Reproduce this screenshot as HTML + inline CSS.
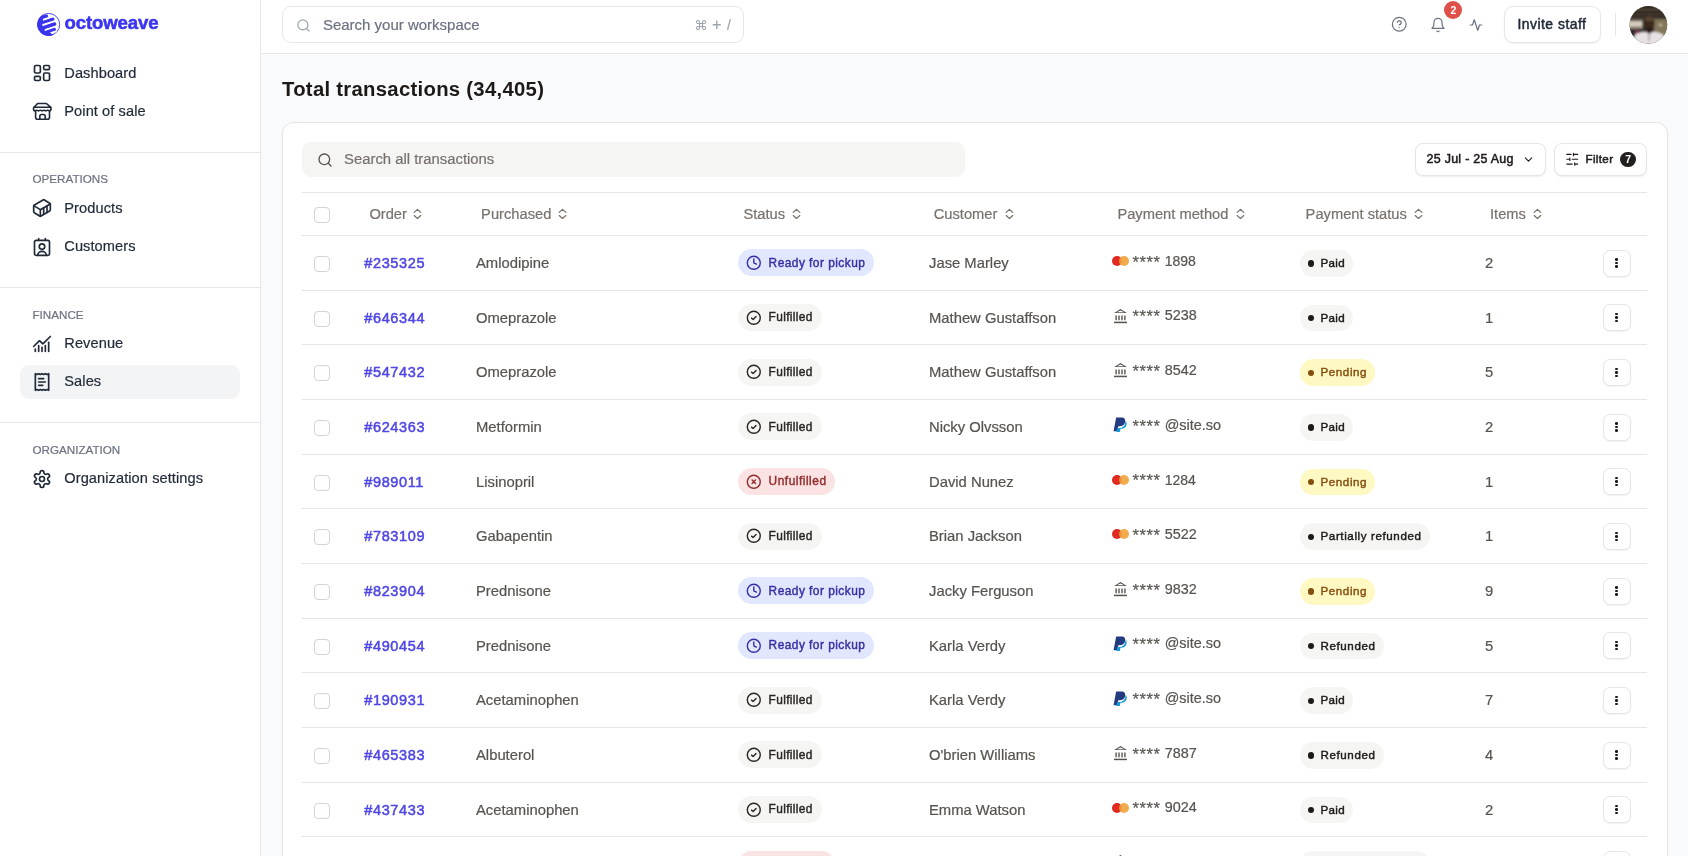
<!DOCTYPE html>
<html><head><meta charset="utf-8"><title>Transactions</title><style>
*{margin:0;padding:0;box-sizing:border-box}
html,body{width:1688px;height:856px;overflow:hidden;background:#f9fafb;font-family:"Liberation Sans",sans-serif;position:relative}
body{will-change:transform}
.t{position:absolute;white-space:nowrap}
.r{-webkit-text-stroke:0.2px currentColor}
.i{position:absolute;overflow:visible}
.sidebar{position:absolute;left:0;top:0;width:261px;height:856px;background:#fff;border-right:1px solid #e5e7eb}
.hr{position:absolute;left:0;width:260px;height:1px;background:#e5e7eb}
.active{position:absolute;background:#f3f4f6;border-radius:9px}
.header{position:absolute;left:261px;top:0;width:1427px;height:53.5px;background:#fff;border-bottom:1px solid #e5e7eb}
.box{position:absolute}
.btn{position:absolute;background:#fff;border:1px solid #e7e5e4;box-shadow:0 1px 1.5px rgba(0,0,0,.07)}
.badge2{position:absolute;left:1444.4px;top:1.2px;width:18px;height:18px;border-radius:50%;background:#e0504a;color:#fff;font-size:10.5px;font-weight:700;line-height:18px;text-align:center;font-family:"Liberation Sans",sans-serif}
.avatar{position:absolute;left:1630px;top:6px;width:37.5px;height:37.5px;border-radius:50%;overflow:hidden;
 background:radial-gradient(ellipse 7px 9px at 50% 42%,#3a2418 0,#3a2418 95%,transparent 100%),
 radial-gradient(ellipse 16px 10px at 50% 100%,#e8e2da 0,#e8e2da 90%,transparent 100%),
 linear-gradient(180deg,#2a2620 0,#5a4a38 40%,#3c3228 70%,#2a241e 100%)}
.card{position:absolute;left:282px;top:122px;width:1385.5px;height:800px;background:#fff;border:1px solid #e7e5e4;border-radius:12px;box-shadow:0 1px 3px rgba(0,0,0,.035)}
.tl{position:absolute;left:302px;width:1344.6px;height:1px;background:#e7e5e4}
.cb{position:absolute;left:314px;width:16px;height:16px;border:1px solid #d6d3d1;border-radius:4px;background:#fff}
.pill{position:absolute;height:27px;border-radius:14px}
.dot{position:absolute;width:6.2px;height:6.2px;border-radius:50%}
.mc{position:absolute;left:1112.3px;width:16.5px;height:10px}
.mc i{position:absolute;top:0;width:10px;height:10px;border-radius:50%}
.act{position:absolute;left:1603px;width:28px;height:27px;border:1px solid #e7e5e4;border-radius:7px;background:#fff;box-shadow:0 1px 1.5px rgba(0,0,0,.06)}
.act i{position:absolute;left:11.1px;width:2.5px;height:2.5px;border-radius:50%;background:#1c1917}
.act i:nth-child(1){top:7.6px}.act i:nth-child(2){top:11.1px}.act i:nth-child(3){top:14.6px}
.cnt{position:absolute;left:1620.3px;top:151.6px;width:15.5px;height:15.5px;border-radius:50%;background:#231f1e;color:#fff;font-size:10.5px;font-weight:700;line-height:15.5px;text-align:center}
</style></head>
<body>
<div class="sidebar"></div>
<svg class="i" style="left:36px;top:12px" width="26" height="26" viewBox="0 0 26 26"><defs><clipPath id="lc"><circle cx="12.7" cy="12.45" r="11.4"/></clipPath></defs><circle cx="12.7" cy="12.45" r="11.0" fill="none" stroke="#3b35f0" stroke-width="0.9"/><g clip-path="url(#lc)" fill="#3b35f0" stroke="#3b35f0" stroke-linecap="round" stroke-width="3.7"><path d="M-1 -1 H7.3 V10 H6.7 V15 H9.1 V21 H15.2 V27 H-1 Z" stroke="none"/><path d="M-5 9.3 L10.3 4.3"/><path d="M-5 14.6 L16.6 7.4"/><path d="M-5 19.9 L18.5 12.1"/><path d="M-5 25.2 L18.1 17.5"/><path d="M-5 30.5 L15.6 23.7"/></g><g stroke="#fff" stroke-width="1.45" stroke-linecap="round" fill="none"><path d="M7.6 7.5 L12 6"/><path d="M7.0 12.8 L18 9.2"/><path d="M9.3 18.0 L19.5 14.6"/><path d="M15.4 20.8 L20 19.3"/></g></svg>
<div class="t" style="left:64.60px;top:14.06px;font-size:18.6px;line-height:18.6px;color:#3b35f0;font-weight:700;letter-spacing:-0.15px;-webkit-text-stroke:0.55px #3b35f0">octoweave</div>
<svg class="i" style="left:32.20px;top:63.00px;" width="20" height="20" viewBox="0 0 24 24" fill="none" stroke="#1f2937" stroke-width="2" stroke-linecap="round" stroke-linejoin="round"><rect x="3" y="3" width="7" height="9" rx="1.5"/><rect x="14" y="3" width="7" height="5" rx="1.5"/><rect x="14" y="12" width="7" height="9" rx="1.5"/><rect x="3" y="16" width="7" height="5" rx="1.5"/></svg>
<div class="t r" style="left:64.30px;top:65.64px;font-size:14.6px;line-height:14.6px;color:#1f2937;font-weight:400;letter-spacing:0.08px;">Dashboard</div>
<svg class="i" style="left:30px;top:98px" width="25" height="26" viewBox="0 0 25 26" fill="none" stroke="#1f2937" stroke-width="1.6" stroke-linecap="round" stroke-linejoin="round"><path d="M7.6 5.5 H16.4 L20.6 9.2 H4.1 Z"/><path d="M4.1 9.2 Q3.5 9.5 3.5 10.5 V11.4 Q3.6 12.9 5 12.9 Q6.8 11.7 8.6 12.9 Q10.4 11.7 12.2 12.9 Q14 11.7 15.8 12.9 Q17.6 11.7 19.5 12.9 Q20.9 12.9 21 11.4 V10.5 Q21 9.5 20.6 9.2"/><path d="M5.6 13.2 V19.3 Q5.6 21.3 7.6 21.3 H17.5 Q19.5 21.3 19.5 19.3 V13.2"/><path d="M9.8 21.3 V18.3 Q9.8 16.5 11.6 16.5 H13.4 Q15.2 16.5 15.2 18.3 V21.3"/></svg>
<div class="t r" style="left:64.30px;top:103.74px;font-size:14.6px;line-height:14.6px;color:#1f2937;font-weight:400;letter-spacing:0.08px;">Point of sale</div>
<div class="hr" style="top:152px"></div>
<div class="t r" style="left:32.50px;top:173.44px;font-size:11.65px;line-height:11.65px;color:#6b7280;font-weight:400;letter-spacing:0px;">OPERATIONS</div>
<svg class="i" style="left:32.30px;top:198.30px;" width="20" height="20" viewBox="0 0 24 24" fill="none" stroke="#1f2937" stroke-width="2" stroke-linecap="round" stroke-linejoin="round"><path d="M22 7.7c0-.6-.4-1.2-.8-1.5l-6.3-3.9a1.72 1.72 0 0 0-1.7 0l-10.3 6c-.5.2-.9.8-.9 1.4v6.6c0 .5.4 1.2.8 1.5l6.3 3.9a1.72 1.72 0 0 0 1.7 0l10.3-6c.5-.3.9-1 .9-1.5Z"/><path d="M10 21.9V14L2.1 9.1"/><path d="m10 14 11.9-6.9"/><path d="M14 19.8v-8.1"/><path d="M18 17.5V9.4"/></svg>
<div class="t r" style="left:64.30px;top:200.64px;font-size:14.6px;line-height:14.6px;color:#1f2937;font-weight:400;letter-spacing:0.08px;">Products</div>
<svg class="i" style="left:32.20px;top:236.50px;" width="20" height="20" viewBox="0 0 24 24" fill="none" stroke="#1f2937" stroke-width="2" stroke-linecap="round" stroke-linejoin="round"><path d="M16 2v2"/><path d="M6.8 22 a5.2 4.8 0 0 1 10.4 0"/><path d="M8 2v2"/><circle cx="12" cy="11.5" r="3.3"/><rect x="3" y="4" width="18" height="18" rx="2"/></svg>
<div class="t r" style="left:64.30px;top:239.24px;font-size:14.6px;line-height:14.6px;color:#1f2937;font-weight:400;letter-spacing:0.08px;">Customers</div>
<div class="hr" style="top:287px"></div>
<div class="t r" style="left:32.50px;top:309.14px;font-size:11.65px;line-height:11.65px;color:#6b7280;font-weight:400;letter-spacing:0px;">FINANCE</div>
<svg class="i" style="left:32.10px;top:333.60px;" width="20" height="20" viewBox="0 0 24 24" fill="none" stroke="#1f2937" stroke-width="2" stroke-linecap="round" stroke-linejoin="round"><path d="M12 16v5"/><path d="M16 14v7"/><path d="M20 10v11"/><path d="m22 3-8.646 8.646a.5.5 0 0 1-.708 0L9.354 8.354a.5.5 0 0 0-.707 0L2 15"/><path d="M4 18v3"/><path d="M8 14v7"/></svg>
<div class="t r" style="left:64.30px;top:335.94px;font-size:14.6px;line-height:14.6px;color:#1f2937;font-weight:400;letter-spacing:0.08px;">Revenue</div>
<div class="active" style="left:20px;top:365px;width:220px;height:34px"></div>
<svg class="i" style="left:32.10px;top:371.60px;" width="20" height="20" viewBox="0 0 24 24" fill="none" stroke="#1f2937" stroke-width="2" stroke-linecap="round" stroke-linejoin="round"><path d="M4 2v20l2-1 2 1 2-1 2 1 2-1 2 1 2-1 2 1V2l-2 1-2-1-2 1-2-1-2 1-2-1-2 1Z"/><path d="M14 8H8"/><path d="M16 12H8"/><path d="M13 16H8"/></svg>
<div class="t r" style="left:64.30px;top:374.24px;font-size:14.6px;line-height:14.6px;color:#1f2937;font-weight:400;letter-spacing:0.08px;">Sales</div>
<div class="hr" style="top:422px"></div>
<div class="t r" style="left:32.50px;top:444.14px;font-size:11.65px;line-height:11.65px;color:#6b7280;font-weight:400;letter-spacing:0px;">ORGANIZATION</div>
<svg class="i" style="left:32.20px;top:468.50px;" width="20" height="20" viewBox="0 0 24 24" fill="none" stroke="#1f2937" stroke-width="2" stroke-linecap="round" stroke-linejoin="round"><path d="M12.22 2h-.44a2 2 0 0 0-2 2v.18a2 2 0 0 1-1 1.73l-.43.25a2 2 0 0 1-2 0l-.15-.08a2 2 0 0 0-2.73.73l-.22.38a2 2 0 0 0 .73 2.73l.15.1a2 2 0 0 1 1 1.72v.51a2 2 0 0 1-1 1.74l-.15.09a2 2 0 0 0-.73 2.73l.22.38a2 2 0 0 0 2.73.73l.15-.08a2 2 0 0 1 2 0l.43.25a2 2 0 0 1 1 1.73V20a2 2 0 0 0 2 2h.44a2 2 0 0 0 2-2v-.18a2 2 0 0 1 1-1.73l.43-.25a2 2 0 0 1 2 0l.15.08a2 2 0 0 0 2.73-.73l.22-.39a2 2 0 0 0-.73-2.73l-.15-.08a2 2 0 0 1-1-1.74v-.5a2 2 0 0 1 1-1.74l.15-.09a2 2 0 0 0 .73-2.73l-.22-.38a2 2 0 0 0-2.73-.73l-.15.08a2 2 0 0 1-2 0l-.43-.25a2 2 0 0 1-1-1.73V4a2 2 0 0 0-2-2z"/><circle cx="12" cy="12" r="3"/></svg>
<div class="t r" style="left:64.30px;top:471.44px;font-size:14.6px;line-height:14.6px;color:#1f2937;font-weight:400;letter-spacing:0.08px;">Organization settings</div>
<div class="header"></div>
<div class="box" style="left:281.5px;top:6px;width:462.5px;height:36.5px;border-radius:9px;border:1px solid #e5e7eb;box-sizing:border-box;background:#fff"></div>
<svg class="i" style="left:296.00px;top:17.80px;" width="15" height="15" viewBox="0 0 24 24" fill="none" stroke="#9ca3af" stroke-width="2" stroke-linecap="round" stroke-linejoin="round"><circle cx="11" cy="11" r="8"/><path d="m21 21-4.3-4.3"/></svg>
<div class="t r" style="left:322.90px;top:17.20px;font-size:15px;line-height:15px;color:#6b7280;font-weight:400;letter-spacing:0px;">Search your workspace</div>
<svg class="i" style="left:694.80px;top:18.80px;" width="12.1" height="12.1" viewBox="0 0 24 24" fill="none" stroke="#9ca3af" stroke-width="2.2" stroke-linecap="round" stroke-linejoin="round"><path d="M15 6v12a3 3 0 1 0 3-3H6a3 3 0 1 0 3 3V6a3 3 0 1 0-3 3h12a3 3 0 1 0-3-3"/></svg>
<div class="t r" style="left:712.00px;top:15.69px;font-size:16.2px;line-height:16.2px;color:#9ca3af;font-weight:400;letter-spacing:0px;">+</div>
<div class="t r" style="left:727.00px;top:17.95px;font-size:14px;line-height:14px;color:#9ca3af;font-weight:400;letter-spacing:0px;">/</div>
<svg class="i" style="left:1391.40px;top:16.20px;" width="16.5" height="16.5" viewBox="0 0 24 24" fill="none" stroke="#6b7280" stroke-width="1.8" stroke-linecap="round" stroke-linejoin="round"><circle cx="12" cy="12" r="10"/><path d="M9.09 9a3 3 0 0 1 5.83 1c0 2-3 3-3 3"/><path d="M12 17h.01"/></svg>
<svg class="i" style="left:1430.30px;top:16.90px;" width="16" height="16" viewBox="0 0 24 24" fill="none" stroke="#6b7280" stroke-width="1.8" stroke-linecap="round" stroke-linejoin="round"><path d="M6 8a6 6 0 0 1 12 0c0 7 3 9 3 9H3s3-2 3-9"/><path d="M10.3 21a1.94 1.94 0 0 0 3.4 0"/></svg>
<div class="badge2">2</div>
<svg class="i" style="left:1469.40px;top:17.70px;" width="14" height="14" viewBox="0 0 24 24" fill="none" stroke="#6b7280" stroke-width="2.1" stroke-linecap="round" stroke-linejoin="round"><path d="M22 12h-4l-3 9L9 3l-3 9H2"/></svg>
<div class="btn" style="left:1504px;top:6px;width:97px;height:36.5px;border-radius:9px;border-color:#e5e7eb"></div>
<div class="t" style="left:1517.40px;top:18.33px;font-size:13.9px;line-height:13.9px;color:#1f2937;font-weight:500;letter-spacing:0.5px;-webkit-text-stroke:0.5px #1f2937">Invite staff</div>
<div style="position:absolute;left:1615px;top:13px;width:1px;height:23px;background:#e5e7eb"></div>
<svg class="i" style="left:1629.1px;top:6.4px" width="38.5" height="38" viewBox="0 0 38.5 38"><defs><clipPath id="av"><circle cx="19.4" cy="18.8" r="18.8"/></clipPath><filter id="bl" x="-20%" y="-20%" width="140%" height="140%"><feGaussianBlur stdDeviation="1"/></filter></defs><g clip-path="url(#av)"><rect x="0" y="0" width="39" height="38" fill="#2f2922"/><g filter="url(#bl)"><rect x="-2" y="3" width="43" height="1.2" fill="#6a5a44"/><rect x="-2" y="7.5" width="43" height="1.1" fill="#54483a"/><rect x="-2" y="11" width="43" height="1" fill="#4e4336"/><rect x="-2" y="13.5" width="16" height="10" fill="#8a8070"/><rect x="-2" y="15.5" width="15" height="5" fill="#d6cebe"/><rect x="25" y="13" width="16" height="20" fill="#84765a"/><rect x="30" y="18" width="3" height="2" fill="#c8bca0"/><rect x="-2" y="23" width="16" height="15" fill="#2c2a2c"/><rect x="6.5" y="25" width="3.2" height="11" fill="#a83866"/><ellipse cx="20.3" cy="17" rx="5.3" ry="7.8" fill="#3a291f"/><ellipse cx="20.3" cy="12.8" rx="4.2" ry="2.6" fill="#5c4434"/><rect x="17.3" y="22" width="6" height="6" fill="#2c1d15"/><path d="M3 40 L6 29 Q9 26.5 16.5 25.5 L20.2 28 L24 25.5 Q31.5 26.5 34.5 29 L38 40 Z" fill="#e6e2e4"/><rect x="19.6" y="27" width="1" height="8" fill="#8a7a70"/></g></g></svg>
<div class="t" style="left:282.00px;top:79.02px;font-size:20.3px;line-height:20.3px;color:#1c1917;font-weight:700;letter-spacing:0.29px;">Total transactions (34,405)</div>
<div class="card"></div>
<div class="box" style="left:302px;top:142px;width:663px;height:34.5px;border-radius:9px;background:#f5f5f4"></div>
<svg class="i" style="left:316.50px;top:152.00px;" width="16" height="16" viewBox="0 0 24 24" fill="none" stroke="#57534e" stroke-width="2" stroke-linecap="round" stroke-linejoin="round"><circle cx="11" cy="11" r="8"/><path d="m21 21-4.3-4.3"/></svg>
<div class="t r" style="left:344.10px;top:151.93px;font-size:14.85px;line-height:14.85px;color:#78716c;font-weight:400;letter-spacing:0px;">Search all transactions</div>
<div class="btn" style="left:1415px;top:143px;width:131px;height:33px;border-radius:8px"></div>
<div class="t" style="left:1426.60px;top:152.66px;font-size:12.45px;line-height:12.45px;color:#1c1917;font-weight:500;letter-spacing:0.27px;-webkit-text-stroke:0.5px #1c1917">25 Jul - 25 Aug</div>
<svg class="i" style="left:1521.50px;top:153.20px;" width="13" height="13" viewBox="0 0 24 24" fill="none" stroke="#1c1917" stroke-width="1.9" stroke-linecap="round" stroke-linejoin="round"><path d="m6 9 6 6 6-6"/></svg>
<div class="btn" style="left:1554px;top:143px;width:93px;height:33px;border-radius:8px"></div>
<svg class="i" style="left:1564.70px;top:152.20px;" width="14.5" height="14.5" viewBox="0 0 24 24" fill="none" stroke="#1c1917" stroke-width="1.9" stroke-linecap="round" stroke-linejoin="round"><path d="M21 4h-7M10 4H3M21 12h-9M8 12H3M21 20h-5M12 20H3M14 2v4M8 10v4M16 18v4"/></svg>
<div class="t" style="left:1585.50px;top:153.38px;font-size:11.6px;line-height:11.6px;color:#1c1917;font-weight:500;letter-spacing:0.35px;-webkit-text-stroke:0.5px #1c1917">Filter</div>
<div class="cnt">7</div>
<div class="tl" style="top:192px"></div>
<div class="tl" style="top:235px"></div>
<div class="cb" style="top:207.00px"></div>
<div class="t r" style="left:369.40px;top:206.86px;font-size:14.7px;line-height:14.7px;color:#78716c;font-weight:400;letter-spacing:0px;">Order</div>
<svg class="i" style="left:412.30px;top:208.20px;" width="11" height="12" viewBox="0 0 11 12" fill="none" stroke="#78716c" stroke-width="1.25" stroke-linecap="round" stroke-linejoin="round"><path d="M2.2 4.4 L5.5 1.4 L8.8 4.4 M2.2 7.6 L5.5 10.4 L8.8 7.6"/></svg>
<div class="t r" style="left:481.10px;top:206.86px;font-size:14.7px;line-height:14.7px;color:#78716c;font-weight:400;letter-spacing:0px;">Purchased</div>
<svg class="i" style="left:557.00px;top:208.20px;" width="11" height="12" viewBox="0 0 11 12" fill="none" stroke="#78716c" stroke-width="1.25" stroke-linecap="round" stroke-linejoin="round"><path d="M2.2 4.4 L5.5 1.4 L8.8 4.4 M2.2 7.6 L5.5 10.4 L8.8 7.6"/></svg>
<div class="t r" style="left:743.40px;top:206.86px;font-size:14.7px;line-height:14.7px;color:#78716c;font-weight:400;letter-spacing:0px;">Status</div>
<svg class="i" style="left:790.50px;top:208.20px;" width="11" height="12" viewBox="0 0 11 12" fill="none" stroke="#78716c" stroke-width="1.25" stroke-linecap="round" stroke-linejoin="round"><path d="M2.2 4.4 L5.5 1.4 L8.8 4.4 M2.2 7.6 L5.5 10.4 L8.8 7.6"/></svg>
<div class="t r" style="left:933.70px;top:206.86px;font-size:14.7px;line-height:14.7px;color:#78716c;font-weight:400;letter-spacing:0px;">Customer</div>
<svg class="i" style="left:1004.10px;top:208.20px;" width="11" height="12" viewBox="0 0 11 12" fill="none" stroke="#78716c" stroke-width="1.25" stroke-linecap="round" stroke-linejoin="round"><path d="M2.2 4.4 L5.5 1.4 L8.8 4.4 M2.2 7.6 L5.5 10.4 L8.8 7.6"/></svg>
<div class="t r" style="left:1117.40px;top:206.86px;font-size:14.7px;line-height:14.7px;color:#78716c;font-weight:400;letter-spacing:0px;">Payment method</div>
<svg class="i" style="left:1234.50px;top:208.20px;" width="11" height="12" viewBox="0 0 11 12" fill="none" stroke="#78716c" stroke-width="1.25" stroke-linecap="round" stroke-linejoin="round"><path d="M2.2 4.4 L5.5 1.4 L8.8 4.4 M2.2 7.6 L5.5 10.4 L8.8 7.6"/></svg>
<div class="t r" style="left:1305.60px;top:206.86px;font-size:14.7px;line-height:14.7px;color:#78716c;font-weight:400;letter-spacing:0px;">Payment status</div>
<svg class="i" style="left:1413.30px;top:208.20px;" width="11" height="12" viewBox="0 0 11 12" fill="none" stroke="#78716c" stroke-width="1.25" stroke-linecap="round" stroke-linejoin="round"><path d="M2.2 4.4 L5.5 1.4 L8.8 4.4 M2.2 7.6 L5.5 10.4 L8.8 7.6"/></svg>
<div class="t r" style="left:1490.00px;top:206.86px;font-size:14.7px;line-height:14.7px;color:#78716c;font-weight:400;letter-spacing:0px;">Items</div>
<svg class="i" style="left:1531.50px;top:208.20px;" width="11" height="12" viewBox="0 0 11 12" fill="none" stroke="#78716c" stroke-width="1.25" stroke-linecap="round" stroke-linejoin="round"><path d="M2.2 4.4 L5.5 1.4 L8.8 4.4 M2.2 7.6 L5.5 10.4 L8.8 7.6"/></svg>
<div class="tl" style="top:289.67px"></div>
<div class="cb" style="top:256.03px"></div>
<div class="t" style="left:364.30px;top:256.13px;font-size:14.5px;line-height:14.5px;color:#4f46e5;font-weight:500;letter-spacing:0.62px;-webkit-text-stroke:0.5px #4f46e5">#235325</div>
<div class="t r" style="left:476.00px;top:255.87px;font-size:14.8px;line-height:14.8px;color:#57534e;font-weight:400;letter-spacing:0px;">Amlodipine</div>
<div class="pill" style="left:738px;top:249.33px;width:136px;background:#e0e7ff"></div>
<svg class="i" style="left:745.70px;top:255.03px;" width="15.6" height="15.6" viewBox="0 0 24 24" fill="none" stroke="#3730a3" stroke-width="2.15" stroke-linecap="round" stroke-linejoin="round"><circle cx="12" cy="12" r="10"/><path d="M12 6v6l4 2"/></svg>
<div class="t" style="left:768.60px;top:257.53px;font-size:11.9px;line-height:11.9px;color:#3730a3;font-weight:500;letter-spacing:0.47px;-webkit-text-stroke:0.42px #3730a3">Ready for pickup</div>
<div class="t r" style="left:929.00px;top:255.87px;font-size:14.8px;line-height:14.8px;color:#57534e;font-weight:400;letter-spacing:0px;">Jase Marley</div>
<div class="mc" style="top:256.03px"><i style="background:#e02a22;left:0"></i><i style="background:#f0a23a;left:6.5px;opacity:.9"></i></div>
<div class="t r" style="left:1132.50px;top:252.03px;font-size:16.5px;line-height:16.5px;color:#57534e;font-weight:400;letter-spacing:0.55px;margin-top:1.8px">****</div>
<div class="t r" style="left:1164.70px;top:254.15px;font-size:14.0px;line-height:14.0px;color:#57534e;font-weight:400;letter-spacing:0px;">1898</div>
<div class="pill" style="left:1300px;top:250.03px;height:26.5px;width:53px;background:#f5f5f4"></div>
<div class="dot" style="left:1308.1px;top:260.33px;background:#1c1917"></div>
<div class="t" style="left:1320.50px;top:256.88px;font-size:11.6px;line-height:11.6px;color:#1c1917;font-weight:500;letter-spacing:0.32px;-webkit-text-stroke:0.42px #1c1917">Paid</div>
<div class="t r" style="left:1485.00px;top:255.87px;font-size:14.8px;line-height:14.8px;color:#57534e;font-weight:400;letter-spacing:0px;">2</div>
<div class="act" style="top:249.63px"><i></i><i></i><i></i></div>
<div class="tl" style="top:344.33px"></div>
<div class="cb" style="top:310.70px"></div>
<div class="t" style="left:364.30px;top:310.79px;font-size:14.5px;line-height:14.5px;color:#4f46e5;font-weight:500;letter-spacing:0.62px;-webkit-text-stroke:0.5px #4f46e5">#646344</div>
<div class="t r" style="left:476.00px;top:310.54px;font-size:14.8px;line-height:14.8px;color:#57534e;font-weight:400;letter-spacing:0px;">Omeprazole</div>
<div class="pill" style="left:738px;top:304.00px;width:83.5px;background:#f5f5f4"></div>
<svg class="i" style="left:745.70px;top:309.70px;" width="15.6" height="15.6" viewBox="0 0 24 24" fill="none" stroke="#292524" stroke-width="2.15" stroke-linecap="round" stroke-linejoin="round"><circle cx="12" cy="12" r="10"/><path d="m8.5 12.5 2.5 2 4.5-4.5"/></svg>
<div class="t" style="left:768.60px;top:312.19px;font-size:11.9px;line-height:11.9px;color:#292524;font-weight:500;letter-spacing:0.36px;-webkit-text-stroke:0.42px #292524">Fulfilled</div>
<div class="t r" style="left:929.00px;top:310.54px;font-size:14.8px;line-height:14.8px;color:#57534e;font-weight:400;letter-spacing:0px;">Mathew Gustaffson</div>
<svg class="i" style="left:1113.90px;top:308.60px;" width="13" height="14.2" viewBox="0 0 13 14.2" fill="none" stroke="none" stroke-width="2" stroke-linecap="round" stroke-linejoin="round"><path d="M6.5 0 L12.9 4.1 H0.1 Z" fill="#57534e"/><path d="M6.5 1.5 L10.3 3.3 H2.7 Z" fill="#fff"/><path d="M2.1 6.4v4.9M5 6.4v4.9M8 6.4v4.9M10.9 6.4v4.9" stroke="#57534e" stroke-width="1.4" stroke-linecap="butt"/><path d="M0 13.45H13" stroke="#57534e" stroke-width="1.5" stroke-linecap="butt"/></svg>
<div class="t r" style="left:1132.50px;top:306.70px;font-size:16.5px;line-height:16.5px;color:#57534e;font-weight:400;letter-spacing:0.55px;margin-top:1.8px">****</div>
<div class="t r" style="left:1164.70px;top:308.48px;font-size:14.4px;line-height:14.4px;color:#57534e;font-weight:400;letter-spacing:0px;">5238</div>
<div class="pill" style="left:1300px;top:304.70px;height:26.5px;width:53px;background:#f5f5f4"></div>
<div class="dot" style="left:1308.1px;top:315.00px;background:#1c1917"></div>
<div class="t" style="left:1320.50px;top:311.55px;font-size:11.6px;line-height:11.6px;color:#1c1917;font-weight:500;letter-spacing:0.32px;-webkit-text-stroke:0.42px #1c1917">Paid</div>
<div class="t r" style="left:1485.00px;top:310.54px;font-size:14.8px;line-height:14.8px;color:#57534e;font-weight:400;letter-spacing:0px;">1</div>
<div class="act" style="top:304.30px"><i></i><i></i><i></i></div>
<div class="tl" style="top:399.00px"></div>
<div class="cb" style="top:365.37px"></div>
<div class="t" style="left:364.30px;top:365.46px;font-size:14.5px;line-height:14.5px;color:#4f46e5;font-weight:500;letter-spacing:0.62px;-webkit-text-stroke:0.5px #4f46e5">#547432</div>
<div class="t r" style="left:476.00px;top:365.21px;font-size:14.8px;line-height:14.8px;color:#57534e;font-weight:400;letter-spacing:0px;">Omeprazole</div>
<div class="pill" style="left:738px;top:358.67px;width:83.5px;background:#f5f5f4"></div>
<svg class="i" style="left:745.70px;top:364.37px;" width="15.6" height="15.6" viewBox="0 0 24 24" fill="none" stroke="#292524" stroke-width="2.15" stroke-linecap="round" stroke-linejoin="round"><circle cx="12" cy="12" r="10"/><path d="m8.5 12.5 2.5 2 4.5-4.5"/></svg>
<div class="t" style="left:768.60px;top:366.86px;font-size:11.9px;line-height:11.9px;color:#292524;font-weight:500;letter-spacing:0.36px;-webkit-text-stroke:0.42px #292524">Fulfilled</div>
<div class="t r" style="left:929.00px;top:365.21px;font-size:14.8px;line-height:14.8px;color:#57534e;font-weight:400;letter-spacing:0px;">Mathew Gustaffson</div>
<svg class="i" style="left:1113.90px;top:363.27px;" width="13" height="14.2" viewBox="0 0 13 14.2" fill="none" stroke="none" stroke-width="2" stroke-linecap="round" stroke-linejoin="round"><path d="M6.5 0 L12.9 4.1 H0.1 Z" fill="#57534e"/><path d="M6.5 1.5 L10.3 3.3 H2.7 Z" fill="#fff"/><path d="M2.1 6.4v4.9M5 6.4v4.9M8 6.4v4.9M10.9 6.4v4.9" stroke="#57534e" stroke-width="1.4" stroke-linecap="butt"/><path d="M0 13.45H13" stroke="#57534e" stroke-width="1.5" stroke-linecap="butt"/></svg>
<div class="t r" style="left:1132.50px;top:361.37px;font-size:16.5px;line-height:16.5px;color:#57534e;font-weight:400;letter-spacing:0.55px;margin-top:1.8px">****</div>
<div class="t r" style="left:1164.70px;top:363.14px;font-size:14.4px;line-height:14.4px;color:#57534e;font-weight:400;letter-spacing:0px;">8542</div>
<div class="pill" style="left:1300px;top:359.37px;height:26.5px;width:75px;background:#fef9c3"></div>
<div class="dot" style="left:1308.1px;top:369.67px;background:#854d0e"></div>
<div class="t" style="left:1320.50px;top:366.21px;font-size:11.6px;line-height:11.6px;color:#854d0e;font-weight:500;letter-spacing:0.58px;-webkit-text-stroke:0.42px #854d0e">Pending</div>
<div class="t r" style="left:1485.00px;top:365.21px;font-size:14.8px;line-height:14.8px;color:#57534e;font-weight:400;letter-spacing:0px;">5</div>
<div class="act" style="top:358.97px"><i></i><i></i><i></i></div>
<div class="tl" style="top:453.67px"></div>
<div class="cb" style="top:420.03px"></div>
<div class="t" style="left:364.30px;top:420.13px;font-size:14.5px;line-height:14.5px;color:#4f46e5;font-weight:500;letter-spacing:0.62px;-webkit-text-stroke:0.5px #4f46e5">#624363</div>
<div class="t r" style="left:476.00px;top:419.87px;font-size:14.8px;line-height:14.8px;color:#57534e;font-weight:400;letter-spacing:0px;">Metformin</div>
<div class="pill" style="left:738px;top:413.33px;width:83.5px;background:#f5f5f4"></div>
<svg class="i" style="left:745.70px;top:419.03px;" width="15.6" height="15.6" viewBox="0 0 24 24" fill="none" stroke="#292524" stroke-width="2.15" stroke-linecap="round" stroke-linejoin="round"><circle cx="12" cy="12" r="10"/><path d="m8.5 12.5 2.5 2 4.5-4.5"/></svg>
<div class="t" style="left:768.60px;top:421.53px;font-size:11.9px;line-height:11.9px;color:#292524;font-weight:500;letter-spacing:0.36px;-webkit-text-stroke:0.42px #292524">Fulfilled</div>
<div class="t r" style="left:929.00px;top:419.87px;font-size:14.8px;line-height:14.8px;color:#57534e;font-weight:400;letter-spacing:0px;">Nicky Olvsson</div>
<svg class="i" style="left:1112.90px;top:417.23px;" width="13.7" height="15.2" viewBox="0 0 14 15.5" fill="none" stroke="none" stroke-width="2" stroke-linecap="round" stroke-linejoin="round"><path d="M3.2 0.4 H8.6 C11.8 0.4 13 2.4 12.4 5 C11.8 8 9.6 9.4 6.8 9.4 H5.4 L4.4 14.6 H0.6 Z" fill="#253b80"/><path d="M12.8 4.2 C14.2 5.2 14.2 6.6 13.8 8.2 C13.2 10.8 11.2 12 8.6 12 H7.6 L7 15.2 H3.4 L4.2 11.2 H6.6 C9.6 11.2 11.8 9.6 12.4 6.6 Z" fill="#179bd7"/></svg>
<div class="t r" style="left:1132.50px;top:416.03px;font-size:16.5px;line-height:16.5px;color:#57534e;font-weight:400;letter-spacing:0.55px;margin-top:1.8px">****</div>
<div class="t r" style="left:1164.70px;top:417.81px;font-size:14.4px;line-height:14.4px;color:#57534e;font-weight:400;letter-spacing:0px;">@site.so</div>
<div class="pill" style="left:1300px;top:414.03px;height:26.5px;width:53px;background:#f5f5f4"></div>
<div class="dot" style="left:1308.1px;top:424.33px;background:#1c1917"></div>
<div class="t" style="left:1320.50px;top:420.88px;font-size:11.6px;line-height:11.6px;color:#1c1917;font-weight:500;letter-spacing:0.32px;-webkit-text-stroke:0.42px #1c1917">Paid</div>
<div class="t r" style="left:1485.00px;top:419.87px;font-size:14.8px;line-height:14.8px;color:#57534e;font-weight:400;letter-spacing:0px;">2</div>
<div class="act" style="top:413.63px"><i></i><i></i><i></i></div>
<div class="tl" style="top:508.34px"></div>
<div class="cb" style="top:474.70px"></div>
<div class="t" style="left:364.30px;top:474.79px;font-size:14.5px;line-height:14.5px;color:#4f46e5;font-weight:500;letter-spacing:0.62px;-webkit-text-stroke:0.5px #4f46e5">#989011</div>
<div class="t r" style="left:476.00px;top:474.54px;font-size:14.8px;line-height:14.8px;color:#57534e;font-weight:400;letter-spacing:0px;">Lisinopril</div>
<div class="pill" style="left:738px;top:468.00px;width:97px;background:#fbe3e3"></div>
<svg class="i" style="left:745.70px;top:473.70px;" width="15.6" height="15.6" viewBox="0 0 24 24" fill="none" stroke="#932b2b" stroke-width="2.15" stroke-linecap="round" stroke-linejoin="round"><circle cx="12" cy="12" r="10"/><path d="M14.6 9.4 L9.4 14.6 M9.4 9.4 L14.6 14.6"/></svg>
<div class="t" style="left:768.60px;top:476.19px;font-size:11.9px;line-height:11.9px;color:#932b2b;font-weight:500;letter-spacing:0.52px;-webkit-text-stroke:0.42px #932b2b">Unfulfilled</div>
<div class="t r" style="left:929.00px;top:474.54px;font-size:14.8px;line-height:14.8px;color:#57534e;font-weight:400;letter-spacing:0px;">David Nunez</div>
<div class="mc" style="top:474.70px"><i style="background:#e02a22;left:0"></i><i style="background:#f0a23a;left:6.5px;opacity:.9"></i></div>
<div class="t r" style="left:1132.50px;top:470.70px;font-size:16.5px;line-height:16.5px;color:#57534e;font-weight:400;letter-spacing:0.55px;margin-top:1.8px">****</div>
<div class="t r" style="left:1164.70px;top:472.82px;font-size:14.0px;line-height:14.0px;color:#57534e;font-weight:400;letter-spacing:0px;">1284</div>
<div class="pill" style="left:1300px;top:468.70px;height:26.5px;width:75px;background:#fef9c3"></div>
<div class="dot" style="left:1308.1px;top:479.00px;background:#854d0e"></div>
<div class="t" style="left:1320.50px;top:475.55px;font-size:11.6px;line-height:11.6px;color:#854d0e;font-weight:500;letter-spacing:0.58px;-webkit-text-stroke:0.42px #854d0e">Pending</div>
<div class="t r" style="left:1485.00px;top:474.54px;font-size:14.8px;line-height:14.8px;color:#57534e;font-weight:400;letter-spacing:0px;">1</div>
<div class="act" style="top:468.30px"><i></i><i></i><i></i></div>
<div class="tl" style="top:563.00px"></div>
<div class="cb" style="top:529.37px"></div>
<div class="t" style="left:364.30px;top:529.46px;font-size:14.5px;line-height:14.5px;color:#4f46e5;font-weight:500;letter-spacing:0.62px;-webkit-text-stroke:0.5px #4f46e5">#783109</div>
<div class="t r" style="left:476.00px;top:529.21px;font-size:14.8px;line-height:14.8px;color:#57534e;font-weight:400;letter-spacing:0px;">Gabapentin</div>
<div class="pill" style="left:738px;top:522.67px;width:83.5px;background:#f5f5f4"></div>
<svg class="i" style="left:745.70px;top:528.37px;" width="15.6" height="15.6" viewBox="0 0 24 24" fill="none" stroke="#292524" stroke-width="2.15" stroke-linecap="round" stroke-linejoin="round"><circle cx="12" cy="12" r="10"/><path d="m8.5 12.5 2.5 2 4.5-4.5"/></svg>
<div class="t" style="left:768.60px;top:530.86px;font-size:11.9px;line-height:11.9px;color:#292524;font-weight:500;letter-spacing:0.36px;-webkit-text-stroke:0.42px #292524">Fulfilled</div>
<div class="t r" style="left:929.00px;top:529.21px;font-size:14.8px;line-height:14.8px;color:#57534e;font-weight:400;letter-spacing:0px;">Brian Jackson</div>
<div class="mc" style="top:529.37px"><i style="background:#e02a22;left:0"></i><i style="background:#f0a23a;left:6.5px;opacity:.9"></i></div>
<div class="t r" style="left:1132.50px;top:525.37px;font-size:16.5px;line-height:16.5px;color:#57534e;font-weight:400;letter-spacing:0.55px;margin-top:1.8px">****</div>
<div class="t r" style="left:1164.70px;top:527.15px;font-size:14.4px;line-height:14.4px;color:#57534e;font-weight:400;letter-spacing:0px;">5522</div>
<div class="pill" style="left:1300px;top:523.37px;height:26.5px;width:130px;background:#f5f5f4"></div>
<div class="dot" style="left:1308.1px;top:533.67px;background:#1c1917"></div>
<div class="t" style="left:1320.50px;top:530.22px;font-size:11.6px;line-height:11.6px;color:#1c1917;font-weight:500;letter-spacing:0.6px;-webkit-text-stroke:0.42px #1c1917">Partially refunded</div>
<div class="t r" style="left:1485.00px;top:529.21px;font-size:14.8px;line-height:14.8px;color:#57534e;font-weight:400;letter-spacing:0px;">1</div>
<div class="act" style="top:522.97px"><i></i><i></i><i></i></div>
<div class="tl" style="top:617.67px"></div>
<div class="cb" style="top:584.04px"></div>
<div class="t" style="left:364.30px;top:584.13px;font-size:14.5px;line-height:14.5px;color:#4f46e5;font-weight:500;letter-spacing:0.62px;-webkit-text-stroke:0.5px #4f46e5">#823904</div>
<div class="t r" style="left:476.00px;top:583.87px;font-size:14.8px;line-height:14.8px;color:#57534e;font-weight:400;letter-spacing:0px;">Prednisone</div>
<div class="pill" style="left:738px;top:577.34px;width:136px;background:#e0e7ff"></div>
<svg class="i" style="left:745.70px;top:583.04px;" width="15.6" height="15.6" viewBox="0 0 24 24" fill="none" stroke="#3730a3" stroke-width="2.15" stroke-linecap="round" stroke-linejoin="round"><circle cx="12" cy="12" r="10"/><path d="M12 6v6l4 2"/></svg>
<div class="t" style="left:768.60px;top:585.53px;font-size:11.9px;line-height:11.9px;color:#3730a3;font-weight:500;letter-spacing:0.47px;-webkit-text-stroke:0.42px #3730a3">Ready for pickup</div>
<div class="t r" style="left:929.00px;top:583.87px;font-size:14.8px;line-height:14.8px;color:#57534e;font-weight:400;letter-spacing:0px;">Jacky Ferguson</div>
<svg class="i" style="left:1113.90px;top:581.94px;" width="13" height="14.2" viewBox="0 0 13 14.2" fill="none" stroke="none" stroke-width="2" stroke-linecap="round" stroke-linejoin="round"><path d="M6.5 0 L12.9 4.1 H0.1 Z" fill="#57534e"/><path d="M6.5 1.5 L10.3 3.3 H2.7 Z" fill="#fff"/><path d="M2.1 6.4v4.9M5 6.4v4.9M8 6.4v4.9M10.9 6.4v4.9" stroke="#57534e" stroke-width="1.4" stroke-linecap="butt"/><path d="M0 13.45H13" stroke="#57534e" stroke-width="1.5" stroke-linecap="butt"/></svg>
<div class="t r" style="left:1132.50px;top:580.03px;font-size:16.5px;line-height:16.5px;color:#57534e;font-weight:400;letter-spacing:0.55px;margin-top:1.8px">****</div>
<div class="t r" style="left:1164.70px;top:581.81px;font-size:14.4px;line-height:14.4px;color:#57534e;font-weight:400;letter-spacing:0px;">9832</div>
<div class="pill" style="left:1300px;top:578.04px;height:26.5px;width:75px;background:#fef9c3"></div>
<div class="dot" style="left:1308.1px;top:588.34px;background:#854d0e"></div>
<div class="t" style="left:1320.50px;top:584.88px;font-size:11.6px;line-height:11.6px;color:#854d0e;font-weight:500;letter-spacing:0.58px;-webkit-text-stroke:0.42px #854d0e">Pending</div>
<div class="t r" style="left:1485.00px;top:583.87px;font-size:14.8px;line-height:14.8px;color:#57534e;font-weight:400;letter-spacing:0px;">9</div>
<div class="act" style="top:577.64px"><i></i><i></i><i></i></div>
<div class="tl" style="top:672.34px"></div>
<div class="cb" style="top:638.70px"></div>
<div class="t" style="left:364.30px;top:638.79px;font-size:14.5px;line-height:14.5px;color:#4f46e5;font-weight:500;letter-spacing:0.62px;-webkit-text-stroke:0.5px #4f46e5">#490454</div>
<div class="t r" style="left:476.00px;top:638.54px;font-size:14.8px;line-height:14.8px;color:#57534e;font-weight:400;letter-spacing:0px;">Prednisone</div>
<div class="pill" style="left:738px;top:632.00px;width:136px;background:#e0e7ff"></div>
<svg class="i" style="left:745.70px;top:637.70px;" width="15.6" height="15.6" viewBox="0 0 24 24" fill="none" stroke="#3730a3" stroke-width="2.15" stroke-linecap="round" stroke-linejoin="round"><circle cx="12" cy="12" r="10"/><path d="M12 6v6l4 2"/></svg>
<div class="t" style="left:768.60px;top:640.20px;font-size:11.9px;line-height:11.9px;color:#3730a3;font-weight:500;letter-spacing:0.47px;-webkit-text-stroke:0.42px #3730a3">Ready for pickup</div>
<div class="t r" style="left:929.00px;top:638.54px;font-size:14.8px;line-height:14.8px;color:#57534e;font-weight:400;letter-spacing:0px;">Karla Verdy</div>
<svg class="i" style="left:1112.90px;top:635.90px;" width="13.7" height="15.2" viewBox="0 0 14 15.5" fill="none" stroke="none" stroke-width="2" stroke-linecap="round" stroke-linejoin="round"><path d="M3.2 0.4 H8.6 C11.8 0.4 13 2.4 12.4 5 C11.8 8 9.6 9.4 6.8 9.4 H5.4 L4.4 14.6 H0.6 Z" fill="#253b80"/><path d="M12.8 4.2 C14.2 5.2 14.2 6.6 13.8 8.2 C13.2 10.8 11.2 12 8.6 12 H7.6 L7 15.2 H3.4 L4.2 11.2 H6.6 C9.6 11.2 11.8 9.6 12.4 6.6 Z" fill="#179bd7"/></svg>
<div class="t r" style="left:1132.50px;top:634.70px;font-size:16.5px;line-height:16.5px;color:#57534e;font-weight:400;letter-spacing:0.55px;margin-top:1.8px">****</div>
<div class="t r" style="left:1164.70px;top:636.48px;font-size:14.4px;line-height:14.4px;color:#57534e;font-weight:400;letter-spacing:0px;">@site.so</div>
<div class="pill" style="left:1300px;top:632.70px;height:26.5px;width:83.5px;background:#f5f5f4"></div>
<div class="dot" style="left:1308.1px;top:643.00px;background:#1c1917"></div>
<div class="t" style="left:1320.50px;top:639.55px;font-size:11.6px;line-height:11.6px;color:#1c1917;font-weight:500;letter-spacing:0.59px;-webkit-text-stroke:0.42px #1c1917">Refunded</div>
<div class="t r" style="left:1485.00px;top:638.54px;font-size:14.8px;line-height:14.8px;color:#57534e;font-weight:400;letter-spacing:0px;">5</div>
<div class="act" style="top:632.30px"><i></i><i></i><i></i></div>
<div class="tl" style="top:727.00px"></div>
<div class="cb" style="top:693.37px"></div>
<div class="t" style="left:364.30px;top:693.46px;font-size:14.5px;line-height:14.5px;color:#4f46e5;font-weight:500;letter-spacing:0.62px;-webkit-text-stroke:0.5px #4f46e5">#190931</div>
<div class="t r" style="left:476.00px;top:693.21px;font-size:14.8px;line-height:14.8px;color:#57534e;font-weight:400;letter-spacing:0px;">Acetaminophen</div>
<div class="pill" style="left:738px;top:686.67px;width:83.5px;background:#f5f5f4"></div>
<svg class="i" style="left:745.70px;top:692.37px;" width="15.6" height="15.6" viewBox="0 0 24 24" fill="none" stroke="#292524" stroke-width="2.15" stroke-linecap="round" stroke-linejoin="round"><circle cx="12" cy="12" r="10"/><path d="m8.5 12.5 2.5 2 4.5-4.5"/></svg>
<div class="t" style="left:768.60px;top:694.86px;font-size:11.9px;line-height:11.9px;color:#292524;font-weight:500;letter-spacing:0.36px;-webkit-text-stroke:0.42px #292524">Fulfilled</div>
<div class="t r" style="left:929.00px;top:693.21px;font-size:14.8px;line-height:14.8px;color:#57534e;font-weight:400;letter-spacing:0px;">Karla Verdy</div>
<svg class="i" style="left:1112.90px;top:690.57px;" width="13.7" height="15.2" viewBox="0 0 14 15.5" fill="none" stroke="none" stroke-width="2" stroke-linecap="round" stroke-linejoin="round"><path d="M3.2 0.4 H8.6 C11.8 0.4 13 2.4 12.4 5 C11.8 8 9.6 9.4 6.8 9.4 H5.4 L4.4 14.6 H0.6 Z" fill="#253b80"/><path d="M12.8 4.2 C14.2 5.2 14.2 6.6 13.8 8.2 C13.2 10.8 11.2 12 8.6 12 H7.6 L7 15.2 H3.4 L4.2 11.2 H6.6 C9.6 11.2 11.8 9.6 12.4 6.6 Z" fill="#179bd7"/></svg>
<div class="t r" style="left:1132.50px;top:689.37px;font-size:16.5px;line-height:16.5px;color:#57534e;font-weight:400;letter-spacing:0.55px;margin-top:1.8px">****</div>
<div class="t r" style="left:1164.70px;top:691.15px;font-size:14.4px;line-height:14.4px;color:#57534e;font-weight:400;letter-spacing:0px;">@site.so</div>
<div class="pill" style="left:1300px;top:687.37px;height:26.5px;width:53px;background:#f5f5f4"></div>
<div class="dot" style="left:1308.1px;top:697.67px;background:#1c1917"></div>
<div class="t" style="left:1320.50px;top:694.22px;font-size:11.6px;line-height:11.6px;color:#1c1917;font-weight:500;letter-spacing:0.32px;-webkit-text-stroke:0.42px #1c1917">Paid</div>
<div class="t r" style="left:1485.00px;top:693.21px;font-size:14.8px;line-height:14.8px;color:#57534e;font-weight:400;letter-spacing:0px;">7</div>
<div class="act" style="top:686.97px"><i></i><i></i><i></i></div>
<div class="tl" style="top:781.67px"></div>
<div class="cb" style="top:748.04px"></div>
<div class="t" style="left:364.30px;top:748.13px;font-size:14.5px;line-height:14.5px;color:#4f46e5;font-weight:500;letter-spacing:0.62px;-webkit-text-stroke:0.5px #4f46e5">#465383</div>
<div class="t r" style="left:476.00px;top:747.87px;font-size:14.8px;line-height:14.8px;color:#57534e;font-weight:400;letter-spacing:0px;">Albuterol</div>
<div class="pill" style="left:738px;top:741.34px;width:83.5px;background:#f5f5f4"></div>
<svg class="i" style="left:745.70px;top:747.04px;" width="15.6" height="15.6" viewBox="0 0 24 24" fill="none" stroke="#292524" stroke-width="2.15" stroke-linecap="round" stroke-linejoin="round"><circle cx="12" cy="12" r="10"/><path d="m8.5 12.5 2.5 2 4.5-4.5"/></svg>
<div class="t" style="left:768.60px;top:749.53px;font-size:11.9px;line-height:11.9px;color:#292524;font-weight:500;letter-spacing:0.36px;-webkit-text-stroke:0.42px #292524">Fulfilled</div>
<div class="t r" style="left:929.00px;top:747.87px;font-size:14.8px;line-height:14.8px;color:#57534e;font-weight:400;letter-spacing:0px;">O'brien Williams</div>
<svg class="i" style="left:1113.90px;top:745.94px;" width="13" height="14.2" viewBox="0 0 13 14.2" fill="none" stroke="none" stroke-width="2" stroke-linecap="round" stroke-linejoin="round"><path d="M6.5 0 L12.9 4.1 H0.1 Z" fill="#57534e"/><path d="M6.5 1.5 L10.3 3.3 H2.7 Z" fill="#fff"/><path d="M2.1 6.4v4.9M5 6.4v4.9M8 6.4v4.9M10.9 6.4v4.9" stroke="#57534e" stroke-width="1.4" stroke-linecap="butt"/><path d="M0 13.45H13" stroke="#57534e" stroke-width="1.5" stroke-linecap="butt"/></svg>
<div class="t r" style="left:1132.50px;top:744.04px;font-size:16.5px;line-height:16.5px;color:#57534e;font-weight:400;letter-spacing:0.55px;margin-top:1.8px">****</div>
<div class="t r" style="left:1164.70px;top:745.81px;font-size:14.4px;line-height:14.4px;color:#57534e;font-weight:400;letter-spacing:0px;">7887</div>
<div class="pill" style="left:1300px;top:742.04px;height:26.5px;width:83.5px;background:#f5f5f4"></div>
<div class="dot" style="left:1308.1px;top:752.34px;background:#1c1917"></div>
<div class="t" style="left:1320.50px;top:748.88px;font-size:11.6px;line-height:11.6px;color:#1c1917;font-weight:500;letter-spacing:0.59px;-webkit-text-stroke:0.42px #1c1917">Refunded</div>
<div class="t r" style="left:1485.00px;top:747.87px;font-size:14.8px;line-height:14.8px;color:#57534e;font-weight:400;letter-spacing:0px;">4</div>
<div class="act" style="top:741.64px"><i></i><i></i><i></i></div>
<div class="tl" style="top:836.34px"></div>
<div class="cb" style="top:802.70px"></div>
<div class="t" style="left:364.30px;top:802.80px;font-size:14.5px;line-height:14.5px;color:#4f46e5;font-weight:500;letter-spacing:0.62px;-webkit-text-stroke:0.5px #4f46e5">#437433</div>
<div class="t r" style="left:476.00px;top:802.54px;font-size:14.8px;line-height:14.8px;color:#57534e;font-weight:400;letter-spacing:0px;">Acetaminophen</div>
<div class="pill" style="left:738px;top:796.00px;width:83.5px;background:#f5f5f4"></div>
<svg class="i" style="left:745.70px;top:801.70px;" width="15.6" height="15.6" viewBox="0 0 24 24" fill="none" stroke="#292524" stroke-width="2.15" stroke-linecap="round" stroke-linejoin="round"><circle cx="12" cy="12" r="10"/><path d="m8.5 12.5 2.5 2 4.5-4.5"/></svg>
<div class="t" style="left:768.60px;top:804.20px;font-size:11.9px;line-height:11.9px;color:#292524;font-weight:500;letter-spacing:0.36px;-webkit-text-stroke:0.42px #292524">Fulfilled</div>
<div class="t r" style="left:929.00px;top:802.54px;font-size:14.8px;line-height:14.8px;color:#57534e;font-weight:400;letter-spacing:0px;">Emma Watson</div>
<div class="mc" style="top:802.70px"><i style="background:#e02a22;left:0"></i><i style="background:#f0a23a;left:6.5px;opacity:.9"></i></div>
<div class="t r" style="left:1132.50px;top:798.70px;font-size:16.5px;line-height:16.5px;color:#57534e;font-weight:400;letter-spacing:0.55px;margin-top:1.8px">****</div>
<div class="t r" style="left:1164.70px;top:800.48px;font-size:14.4px;line-height:14.4px;color:#57534e;font-weight:400;letter-spacing:0px;">9024</div>
<div class="pill" style="left:1300px;top:796.70px;height:26.5px;width:53px;background:#f5f5f4"></div>
<div class="dot" style="left:1308.1px;top:807.00px;background:#1c1917"></div>
<div class="t" style="left:1320.50px;top:803.55px;font-size:11.6px;line-height:11.6px;color:#1c1917;font-weight:500;letter-spacing:0.32px;-webkit-text-stroke:0.42px #1c1917">Paid</div>
<div class="t r" style="left:1485.00px;top:802.54px;font-size:14.8px;line-height:14.8px;color:#57534e;font-weight:400;letter-spacing:0px;">2</div>
<div class="act" style="top:796.30px"><i></i><i></i><i></i></div>
<div class="cb" style="top:857.37px"></div>
<div class="t" style="left:364.30px;top:857.46px;font-size:14.5px;line-height:14.5px;color:#4f46e5;font-weight:500;letter-spacing:0.62px;-webkit-text-stroke:0.5px #4f46e5">#512004</div>
<div class="t r" style="left:476.00px;top:857.21px;font-size:14.8px;line-height:14.8px;color:#57534e;font-weight:400;letter-spacing:0px;">Lisinopril</div>
<div class="pill" style="left:738px;top:850.67px;width:97px;background:#fbe3e3"></div>
<svg class="i" style="left:745.70px;top:856.37px;" width="15.6" height="15.6" viewBox="0 0 24 24" fill="none" stroke="#932b2b" stroke-width="2.15" stroke-linecap="round" stroke-linejoin="round"><circle cx="12" cy="12" r="10"/><path d="M14.6 9.4 L9.4 14.6 M9.4 9.4 L14.6 14.6"/></svg>
<div class="t" style="left:768.60px;top:858.86px;font-size:11.9px;line-height:11.9px;color:#932b2b;font-weight:500;letter-spacing:0.52px;-webkit-text-stroke:0.42px #932b2b">Unfulfilled</div>
<div class="t r" style="left:929.00px;top:857.21px;font-size:14.8px;line-height:14.8px;color:#57534e;font-weight:400;letter-spacing:0px;">Jase Marley</div>
<svg class="i" style="left:1113.90px;top:855.27px;" width="13" height="14.2" viewBox="0 0 13 14.2" fill="none" stroke="none" stroke-width="2" stroke-linecap="round" stroke-linejoin="round"><path d="M6.5 0 L12.9 4.1 H0.1 Z" fill="#57534e"/><path d="M6.5 1.5 L10.3 3.3 H2.7 Z" fill="#fff"/><path d="M2.1 6.4v4.9M5 6.4v4.9M8 6.4v4.9M10.9 6.4v4.9" stroke="#57534e" stroke-width="1.4" stroke-linecap="butt"/><path d="M0 13.45H13" stroke="#57534e" stroke-width="1.5" stroke-linecap="butt"/></svg>
<div class="t r" style="left:1132.50px;top:853.37px;font-size:16.5px;line-height:16.5px;color:#57534e;font-weight:400;letter-spacing:0.55px;margin-top:1.8px">****</div>
<div class="t r" style="left:1164.70px;top:855.49px;font-size:14.0px;line-height:14.0px;color:#57534e;font-weight:400;letter-spacing:0px;">4410</div>
<div class="pill" style="left:1300px;top:851.37px;height:26.5px;width:130px;background:#f5f5f4"></div>
<div class="dot" style="left:1308.1px;top:861.67px;background:#1c1917"></div>
<div class="t" style="left:1320.50px;top:858.22px;font-size:11.6px;line-height:11.6px;color:#1c1917;font-weight:500;letter-spacing:0.6px;-webkit-text-stroke:0.42px #1c1917">Partially refunded</div>
<div class="t r" style="left:1485.00px;top:857.21px;font-size:14.8px;line-height:14.8px;color:#57534e;font-weight:400;letter-spacing:0px;">3</div>
<div class="act" style="top:850.97px"><i></i><i></i><i></i></div>
</body></html>
